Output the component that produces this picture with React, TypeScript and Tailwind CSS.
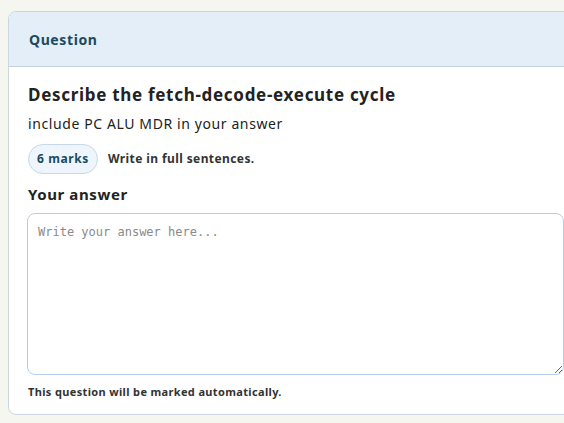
import React from "react";

export default function App() {
  return (
    <div className="h-[423px] w-[564px] overflow-hidden bg-[#f6f6f1] pt-[11px] pl-2 font-['Noto_Sans',sans-serif]">
      <div className="w-[576px] overflow-hidden rounded-lg border border-[#cbd6e2] bg-white">
        <div className="flex h-[55px] items-center border-b border-[#c5d3e1] bg-[#e4eef9] px-5">
          <span className="text-[14px] font-bold tracking-[0.6px] text-[#1b4a5f]">Question</span>
        </div>
        <div className="flex flex-col px-[19px] pt-[18px] pb-[13px]">
          <h2 className="text-[17px] font-bold leading-5 tracking-[0.7px] text-[#222]">
            Describe the fetch-decode-execute cycle
          </h2>
          <p className="mt-[9px] text-[14px] leading-5 tracking-[0.6px] text-[#222]">include PC ALU MDR in your answer</p>
          <div className="mt-[10px] flex items-center gap-[10px]">
            <span className="flex h-[30px] items-center rounded-full border border-[#c7d8ea] bg-[#eef5fc] px-[8px] text-[12px] font-bold tracking-[0.6px] text-[#1b4a5f]">
              6 marks
            </span>
            <span className="text-[12px] font-bold tracking-[0.4px] text-[#333]">Write in full sentences.</span>
          </div>
          <label className="mt-[10px] text-[15px] font-bold leading-5 tracking-[0.6px] text-[#222]">Your answer</label>
          <textarea
            className="-ml-px mt-[9px] h-[162px] w-[537px] resize-y rounded-lg border border-[#b5cde8] px-[10px] py-[9px] font-['DejaVu_Sans_Mono',monospace] text-[12px] text-[#333] placeholder:text-[#8a8a8a] outline-none"
            placeholder="Write your answer here..."
          />
          <p className="mt-[9px] text-[11px] font-bold tracking-[0.35px] text-[#333]">
            This question will be marked automatically.
          </p>
        </div>
      </div>
    </div>
  );
}
